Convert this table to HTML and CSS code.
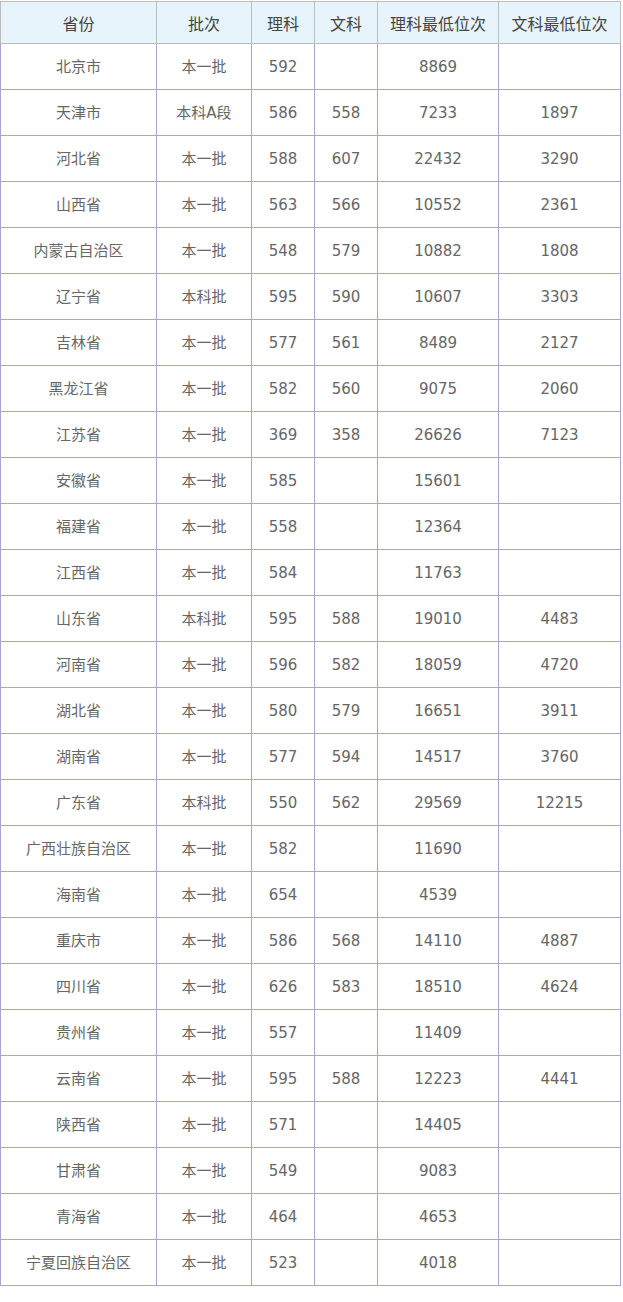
FILE: index.html
```html
<!DOCTYPE html>
<html lang="zh-CN">
<head>
<meta charset="utf-8">
<link rel="stylesheet" href="styles.css">
</head>
<body>
<table class="score-table">
  <colgroup>
    <col class="c1"><col class="c2"><col class="c3"><col class="c4"><col class="c5"><col class="c6">
  </colgroup>
  <thead>
    <tr><th>省份</th><th>批次</th><th>理科</th><th>文科</th><th>理科最低位次</th><th>文科最低位次</th></tr>
  </thead>
  <tbody>
    <tr><td>北京市</td><td>本一批</td><td>592</td><td></td><td>8869</td><td></td></tr>
    <tr><td>天津市</td><td>本科A段</td><td>586</td><td>558</td><td>7233</td><td>1897</td></tr>
    <tr><td>河北省</td><td>本一批</td><td>588</td><td>607</td><td>22432</td><td>3290</td></tr>
    <tr><td>山西省</td><td>本一批</td><td>563</td><td>566</td><td>10552</td><td>2361</td></tr>
    <tr><td>内蒙古自治区</td><td>本一批</td><td>548</td><td>579</td><td>10882</td><td>1808</td></tr>
    <tr><td>辽宁省</td><td>本科批</td><td>595</td><td>590</td><td>10607</td><td>3303</td></tr>
    <tr><td>吉林省</td><td>本一批</td><td>577</td><td>561</td><td>8489</td><td>2127</td></tr>
    <tr><td>黑龙江省</td><td>本一批</td><td>582</td><td>560</td><td>9075</td><td>2060</td></tr>
    <tr><td>江苏省</td><td>本一批</td><td>369</td><td>358</td><td>26626</td><td>7123</td></tr>
    <tr><td>安徽省</td><td>本一批</td><td>585</td><td></td><td>15601</td><td></td></tr>
    <tr><td>福建省</td><td>本一批</td><td>558</td><td></td><td>12364</td><td></td></tr>
    <tr><td>江西省</td><td>本一批</td><td>584</td><td></td><td>11763</td><td></td></tr>
    <tr><td>山东省</td><td>本科批</td><td>595</td><td>588</td><td>19010</td><td>4483</td></tr>
    <tr><td>河南省</td><td>本一批</td><td>596</td><td>582</td><td>18059</td><td>4720</td></tr>
    <tr><td>湖北省</td><td>本一批</td><td>580</td><td>579</td><td>16651</td><td>3911</td></tr>
    <tr><td>湖南省</td><td>本一批</td><td>577</td><td>594</td><td>14517</td><td>3760</td></tr>
    <tr><td>广东省</td><td>本科批</td><td>550</td><td>562</td><td>29569</td><td>12215</td></tr>
    <tr><td>广西壮族自治区</td><td>本一批</td><td>582</td><td></td><td>11690</td><td></td></tr>
    <tr><td>海南省</td><td>本一批</td><td>654</td><td></td><td>4539</td><td></td></tr>
    <tr><td>重庆市</td><td>本一批</td><td>586</td><td>568</td><td>14110</td><td>4887</td></tr>
    <tr><td>四川省</td><td>本一批</td><td>626</td><td>583</td><td>18510</td><td>4624</td></tr>
    <tr><td>贵州省</td><td>本一批</td><td>557</td><td></td><td>11409</td><td></td></tr>
    <tr><td>云南省</td><td>本一批</td><td>595</td><td>588</td><td>12223</td><td>4441</td></tr>
    <tr><td>陕西省</td><td>本一批</td><td>571</td><td></td><td>14405</td><td></td></tr>
    <tr><td>甘肃省</td><td>本一批</td><td>549</td><td></td><td>9083</td><td></td></tr>
    <tr><td>青海省</td><td>本一批</td><td>464</td><td></td><td>4653</td><td></td></tr>
    <tr><td>宁夏回族自治区</td><td>本一批</td><td>523</td><td></td><td>4018</td><td></td></tr>
  </tbody>
</table>
</body>
</html>
```

FILE: styles.css
```css
html, body {
  margin: 0;
  padding: 0;
  background: #ffffff;
}
body {
  padding-top: 1px;
  font-family: "DejaVu Sans", "Noto Sans CJK SC", sans-serif;
}
.score-table {
  border-collapse: collapse;
  table-layout: fixed;
  width: 620px;
  margin: 0;
}
.c1 { width: 156px; }
.c2 { width: 95px; }
.c3 { width: 63px; }
.c4 { width: 63px; }
.c5 { width: 121px; }
.c6 { width: 122px; }
.score-table th {
  background: #e8f4fc;
  border: 1px solid #bdbdbd;
  height: 41px;
  padding: 0;
  font-size: 16px;
  line-height: 22px;
  font-weight: normal;
  color: #444;
  text-align: center;
  vertical-align: middle;
  font-family: "Noto Sans CJK SC", sans-serif;
}
.score-table td {
  border: 1px solid #a9a3d2;
  height: 45px;
  padding: 0;
  font-size: 15px;
  line-height: 20px;
  color: #666;
  text-align: center;
  vertical-align: middle;
}
.score-table tbody tr:first-child td {
  border-top-color: #bdbdbd;
}
```
